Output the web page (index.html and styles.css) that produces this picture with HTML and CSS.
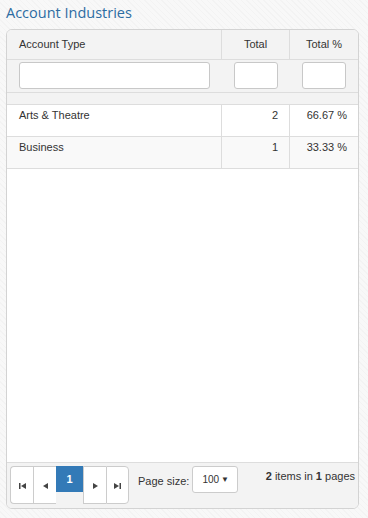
FILE: index.html
```html
<!DOCTYPE html>
<html>
<head>
<meta charset="utf-8">
<link rel="stylesheet" href="styles.css">
</head>
<body>
<div class="page">
  <h1 class="title">Account Industries</h1>
  <div class="grid">
    <div class="row head">
      <div class="cell">Account Type</div>
      <div class="cell right">Total</div>
      <div class="cell right">Total %</div>
    </div>
    <div class="row filter">
      <div class="fcell"><input class="finput" type="text"></div>
      <div class="fcell"><input class="finput" type="text"></div>
      <div class="fcell"><input class="finput" type="text"></div>
    </div>
    <div class="band"></div>
    <div class="row data">
      <div class="cell">Arts &amp; Theatre</div>
      <div class="cell right">2</div>
      <div class="cell right">66.67 %</div>
    </div>
    <div class="row data alt">
      <div class="cell">Business</div>
      <div class="cell right">1</div>
      <div class="cell right">33.33 %</div>
    </div>
    <div class="filler"></div>
    <div class="pager">
      <div class="pbtns">
        <span class="pbtn first"><svg width="7" height="6" viewBox="0 0 7 6"><rect x="0" y="0" width="1.5" height="6" fill="#444"/><path d="M7 0 L2 3 L7 6 Z" fill="#444"/></svg></span>
        <span class="pbtn"><svg width="5" height="6" viewBox="0 0 5 6"><path d="M5 0 L0 3 L5 6 Z" fill="#444"/></svg></span>
        <span class="pactive">1</span>
        <span class="pbtn"><svg width="5" height="6" viewBox="0 0 5 6"><path d="M0 0 L5 3 L0 6 Z" fill="#444"/></svg></span>
        <span class="pbtn last"><svg width="7" height="6" viewBox="0 0 7 6"><path d="M0 0 L5 3 L0 6 Z" fill="#444"/><rect x="5.5" y="0" width="1.5" height="6" fill="#444"/></svg></span>
      </div>
      <div class="psize">
        <span class="plabel">Page size:</span>
        <span class="pselect">100<span class="caret">▼</span></span>
      </div>
      <div class="pinfo"><b>2</b> items in <b>1</b> pages</div>
    </div>
  </div>
</div>
</body>
</html>
```
FILE: styles.css
```css
html, body {
  margin: 0;
  padding: 0;
}
body {
  width: 368px;
  height: 518px;
  overflow: hidden;
  background-color: #f8f8f8;
  background-image: repeating-linear-gradient(45deg, rgba(0,0,0,0.018) 0px, rgba(0,0,0,0.018) 1px, transparent 1px, transparent 4px);
  font-family: "Liberation Sans", Arial, sans-serif;
  font-size: 11px;
  color: #333;
}
.page {
  padding: 3px 9px 0 6px;
  display: flex;
  flex-direction: column;
}
.title {
  margin: 0;
  font-family: "Open Sans", sans-serif;
  font-weight: 400;
  font-size: 14.5px;
  line-height: 20px;
  color: #2d6ca2;
  height: 26px;
}
.grid {
  height: 478px;
  border: 1px solid #d3d3d3;
  border-radius: 6px;
  background: #fff;
  display: flex;
  flex-direction: column;
  overflow: hidden;
}
.row {
  display: grid;
  grid-template-columns: 215px 68px 1fr;
}
.head {
  background: #f3f3f3;
  height: 29px;
  border-bottom: 1px solid #dddddd;
}
.head .cell {
  line-height: 29px;
  padding: 0 12px;
}
.cell {
  border-right: 1px solid #dddddd;
}
.cell:last-child {
  border-right: none;
}
.right {
  text-align: right;
}
.head .right {
  text-align: center;
  padding: 0;
}
.filter {
  background: #f3f3f3;
  height: 32px;
  border-bottom: 1px solid #dddddd;
}
.fcell {
  padding: 2px 12px 0 12px;
}
.finput {
  box-sizing: border-box;
  width: 100%;
  height: 27px;
  border: 1px solid #c8c8c8;
  border-radius: 3px;
  background: #fff;
  margin: 0;
  display: block;
}
.fcell:first-child .finput {
  width: 191px;
}
.band {
  height: 11px;
  background: #f3f3f3;
  border-bottom: 1px solid #dddddd;
}
.data {
  height: 31px;
  border-bottom: 1px solid #dddddd;
  background: #fff;
}
.data.alt {
  background: #f9f9f9;
}
.data .cell {
  padding: 3px 12px 0 12px;
  line-height: 14px;
}
.data .right {
  padding-right: 11px;
}
.filler {
  flex: 1;
  background: #fff;
}
.pager {
  height: 46px;
  border-top: 1px solid #dddddd;
  background: #f3f3f3;
  display: flex;
  align-items: flex-start;
  padding: 3px 3px 0 3px;
  box-sizing: border-box;
}
.pbtns {
  display: flex;
  align-items: flex-start;
}
.pbtn {
  box-sizing: border-box;
  width: 23px;
  height: 38px;
  border: 1px solid #cccccc;
  border-right: none;
  background: #fff;
  display: flex;
  align-items: center;
  justify-content: center;
  padding-top: 2px;
}
.pbtn.first {
  border-radius: 4px 0 0 4px;
}
.pbtn.last {
  border-right: 1px solid #cccccc;
  border-radius: 0 4px 4px 0;
}
.pactive {
  width: 27px;
  height: 26px;
  background: #337ab7;
  color: #fff;
  font-weight: bold;
  text-align: center;
  line-height: 26px;
  font-size: 11px;
}
.pbtn + .pactive + .pbtn {
  border-left: 1px solid #cccccc;
}
.psize {
  display: flex;
  align-items: center;
  margin-left: 9px;
}
.plabel {
  padding-top: 2px;
}
.pselect {
  box-sizing: border-box;
  margin-left: 3px;
  width: 46px;
  height: 27px;
  border: 1px solid #cccccc;
  border-radius: 3px;
  background: #fff;
  display: flex;
  align-items: center;
  padding-left: 9px;
  font-size: 10px;
}
.caret {
  font-size: 8px;
  margin-left: 2px;
}
.pinfo {
  margin-left: auto;
  padding-top: 4px;
  padding-right: 0;
}
```
